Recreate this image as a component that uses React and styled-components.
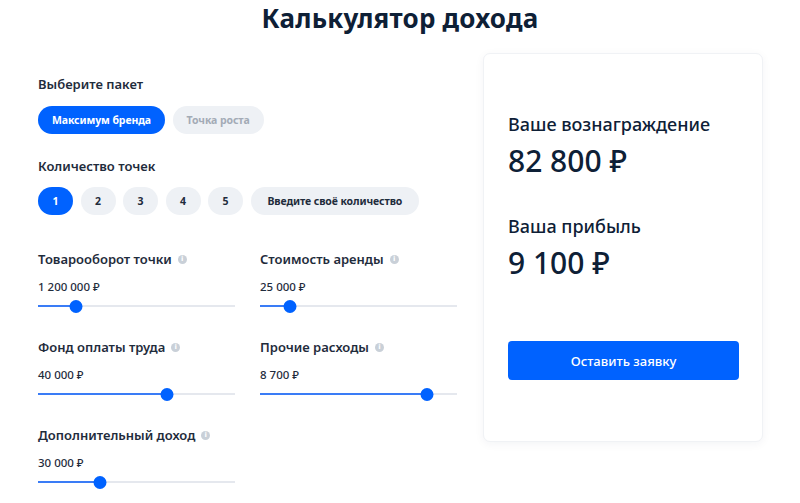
import React from "react";
import styled, { createGlobalStyle } from "styled-components";

const Global = createGlobalStyle`
  html, body { margin: 0; padding: 0; background: #ffffff; }
  body { font-family: "Noto Sans", "Open Sans", sans-serif; color: #1b2a3b; }
  * { box-sizing: border-box; }
`;

const Page = styled.div`
  width: 800px;
  height: 503px;
  overflow: hidden;
  background: #fff;
`;

const Title = styled.h1`
  margin: 0;
  padding-top: 1px;
  height: 36px;
  line-height: 34px;
  text-align: center;
  font-size: 26px;
  font-weight: 700;
  color: #0e2036;
  letter-spacing: 0.2px;
`;

const Content = styled.div`
  display: flex;
  align-items: flex-start;
  gap: 25px;
  padding: 17px 0 0 38px;
`;

const Left = styled.div`
  width: 420px;
  padding-top: 21px;
  display: flex;
  flex-direction: column;
`;

const SectionLabel = styled.div`
  font-size: 13px;
  line-height: 20px;
  font-weight: 600;
  color: #1f2c3c;
`;

const Pills = styled.div`
  display: flex;
  gap: 7.5px;
  margin-top: ${(p) => p.$top}px;
  margin-bottom: ${(p) => p.$bottom}px;
`;

const Pill = styled.button`
  height: 28px;
  width: ${(p) => (p.$square ? "35px" : "auto")};
  padding: 0 ${(p) => (p.$square ? "0" : p.$wide ? "17px" : "14px")};
  border: none;
  border-radius: 14px;
  font-family: inherit;
  font-size: 10.5px;
  font-weight: 700;
  letter-spacing: -0.1px;
  background: ${(p) => (p.$active ? "#0062ff" : "#eef1f5")};
  color: ${(p) => (p.$active ? "#ffffff" : p.$muted ? "#a3abb6" : "#1f2c3c")};
  cursor: pointer;
`;

const SliderGrid = styled.div`
  display: grid;
  grid-template-columns: 197px 197px;
  column-gap: 25px;
  row-gap: 24px;
  margin-top: 34px;
`;

const SliderBlock = styled.div`
  display: flex;
  flex-direction: column;
`;

const SliderLabel = styled.div`
  display: flex;
  align-items: center;
  gap: 6px;
  font-size: 13px;
  line-height: 20px;
  font-weight: 600;
  color: #1f2c3c;
`;

const Info = styled.span`
  width: 9px;
  height: 9px;
  border-radius: 50%;
  background: #c9d0d8;
  color: #fff;
  font-size: 7px;
  line-height: 9px;
  font-weight: 700;
  text-align: center;
  font-family: "DejaVu Sans", sans-serif;
`;

const Value = styled.div`
  margin-top: 10px;
  font-size: 11.5px;
  line-height: 16px;
  font-weight: 500;
  color: #1f2c3c;
`;

const Track = styled.div`
  position: relative;
  margin-top: 4px;
  height: 14px;
  &::before {
    content: "";
    position: absolute;
    left: 0;
    right: 0;
    top: 6px;
    height: 2px;
    background: #e5e8ee;
  }
`;

const Fill = styled.div`
  position: absolute;
  left: 0;
  top: 6px;
  height: 2px;
  background: #3a7cf6;
`;

const Thumb = styled.div`
  position: absolute;
  top: 0.5px;
  width: 13px;
  height: 13px;
  border-radius: 50%;
  background: #0062ff;
  transform: translateX(-50%);
`;

const Card = styled.div`
  width: 280px;
  height: 389px;
  border-radius: 7px;
  background: #fff;
  border: 1px solid #f0f2f5;
  box-shadow: 0 2px 10px rgba(20, 40, 80, 0.05);
  padding: 58px 25px 0 24px;
  display: flex;
  flex-direction: column;
`;

const ResultLabel = styled.div`
  font-size: 18px;
  line-height: 24px;
  font-weight: 500;
  color: #0e2036;
`;

const ResultValue = styled.div`
  margin-top: 6px;
  margin-bottom: ${(p) => p.$bottom}px;
  font-size: 30px;
  line-height: 38px;
  font-weight: 500;
  color: #0e2036;
`;

const Submit = styled.button`
  width: 231px;
  height: 39px;
  border: none;
  border-radius: 4px;
  background: #0062ff;
  color: #fff;
  font-family: inherit;
  font-size: 13px;
  font-weight: 500;
  cursor: pointer;
`;

const sliders = [
  { label: "Товарооборот точки", value: "1 200 000 ₽", pct: 19.3 },
  { label: "Стоимость аренды", value: "25 000 ₽", pct: 15.2 },
  { label: "Фонд оплаты труда", value: "40 000 ₽", pct: 65.5 },
  { label: "Прочие расходы", value: "8 700 ₽", pct: 84.8 },
  { label: "Дополнительный доход", value: "30 000 ₽", pct: 31.5 },
];

function Slider({ label, value, pct }) {
  return (
    <SliderBlock>
      <SliderLabel>
        {label}
        <Info>i</Info>
      </SliderLabel>
      <Value>{value}</Value>
      <Track>
        <Fill style={{ width: `${pct}%` }} />
        <Thumb style={{ left: `${pct}%` }} />
      </Track>
    </SliderBlock>
  );
}

export default function App() {
  return (
    <Page>
      <Global />
      <Title>Калькулятор дохода</Title>
      <Content>
        <Left>
          <SectionLabel>Выберите пакет</SectionLabel>
          <Pills $top={12} $bottom={22}>
            <Pill $active>Максимум бренда</Pill>
            <Pill $muted>Точка роста</Pill>
          </Pills>
          <SectionLabel>Количество точек</SectionLabel>
          <Pills $top={11} $bottom={0}>
            <Pill $square $active>1</Pill>
            <Pill $square>2</Pill>
            <Pill $square>3</Pill>
            <Pill $square>4</Pill>
            <Pill $square>5</Pill>
            <Pill $wide>Введите своё количество</Pill>
          </Pills>
          <SliderGrid>
            {sliders.map((s) => (
              <Slider key={s.label} {...s} />
            ))}
          </SliderGrid>
        </Left>
        <Card>
          <ResultLabel>Ваше вознаграждение</ResultLabel>
          <ResultValue $bottom={34}>82 800 ₽</ResultValue>
          <ResultLabel>Ваша прибыль</ResultLabel>
          <ResultValue $bottom={59}>9 100 ₽</ResultValue>
          <Submit>Оставить заявку</Submit>
        </Card>
      </Content>
    </Page>
  );
}
